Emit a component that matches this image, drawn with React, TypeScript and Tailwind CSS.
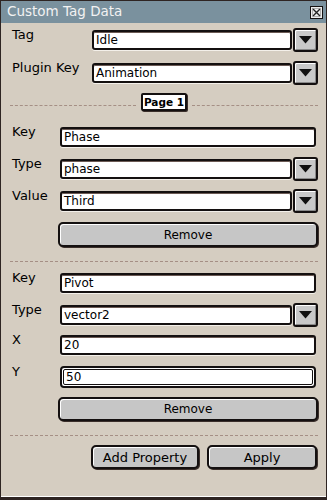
import React from 'react';

const Arrow = () => (
  <div className="w-[25px] h-[24px] shrink-0 bg-[#c9c9c9] border-2 border-[#141010] rounded-[3px] shadow-[inset_1px_1px_0_#ffffff,inset_-1px_-1px_0_#8a8a8a] flex items-center justify-center">
    <svg width="13" height="8" viewBox="0 0 13 8">
      <polygon points="0,0 13,0 6.5,7.5" fill="#111" />
    </svg>
  </div>
);

const Field = ({ value, focused }: { value: string; focused?: boolean }) => {
  if (focused) {
    return (
      <div className="flex-1 h-[22px] border-2 border-[#141010] rounded-[4px] bg-white p-[1px]">
        <div className="h-full border border-[#141010] rounded-[2px] pl-[2px] flex items-center text-[12px] leading-none text-black">
          {value}
        </div>
      </div>
    );
  }
  return (
    <div className="flex-1 h-[20px] bg-white border-2 border-[#141010] rounded-[3px] shadow-[inset_0_1px_0_#6b5a54,0_1px_0_#f4f0ea] pl-[2px] flex items-center text-[12px] leading-none text-black">
      {value}
    </div>
  );
};

const Label = ({ children, w }: { children: React.ReactNode; w: string }) => (
  <div className={`${w} shrink-0 pl-[2px] text-[13px] leading-[13px] text-black`}>{children}</div>
);

const SelectRow = ({ label, value, w }: { label: string; value: string; w: string }) => (
  <div className="flex items-start h-[24px]">
    <Label w={w}>{label}</Label>
    <div className="flex-1 flex items-center gap-[1px] h-[24px]">
      <Field value={value} />
      <Arrow />
    </div>
  </div>
);

const TextRow = ({ label, value, focused }: { label: string; value: string; focused?: boolean }) => (
  <div className="flex items-start h-[24px] pr-[2px]">
    <Label w="w-[50px]">{label}</Label>
    <div className="flex-1 flex items-center h-[24px]">
      <Field value={value} focused={focused} />
    </div>
  </div>
);

const Btn = ({ children, className }: { children: React.ReactNode; className: string }) => (
  <button
    className={`${className} h-[24px] bg-[#c6c6c6] border-2 border-[#141010] rounded-[5px] shadow-[inset_1px_1px_0_#ffffff,1px_1px_0_#3a2e2a] text-[12px] leading-none text-black flex items-center justify-center`}
  >
    {children}
  </button>
);

const Dashed = ({ className = '' }: { className?: string }) => (
  <div className={`border-t border-dashed border-[#a58f85] ${className}`} />
);

export default function App() {
  return (
    <div
      className="w-[327px] h-[500px] flex flex-col bg-[#d5cdc1] border-x border-t border-[#2e2422] border-b-[3px] shadow-[inset_0_-1px_0_#ffffff]"
      style={{ fontFamily: '"DejaVu Sans", sans-serif' }}
    >
      {/* Title bar */}
      <div className="h-[22px] bg-[#7a919e] flex items-center justify-between pl-[6px] pr-[3px]">
        <span className="text-[13.5px] text-[#f2f2f2] leading-none">Custom Tag Data</span>
        <div className="w-[13px] h-[13px] bg-[#ececec] border border-[#141010] flex items-center justify-center">
          <svg width="9" height="9" viewBox="0 0 9 9">
            <path d="M1 1 L8 8 M8 1 L1 8" stroke="#222" strokeWidth="1.4" />
            <rect x="0.5" y="0.5" width="8" height="8" fill="none" stroke="#888" strokeWidth="0.6" />
          </svg>
        </div>
      </div>

      <div className="flex-1 flex flex-col pl-[9px] pr-[8px] pt-[5px]">
        <SelectRow label="Tag" value="Idle" w="w-[82px]" />
        <div className="mt-[9px]">
          <SelectRow label="Plugin Key" value="Animation" w="w-[82px]" />
        </div>

        <div className="mt-[8px] h-[18px] flex items-center gap-[5px]">
          <Dashed className="flex-1 mt-[6px]" />
          <div className="w-[46px] h-[18px] bg-white border-2 border-[#141010] rounded-[2px] shadow-[1px_1px_0_#3a2e2a] flex items-center justify-center text-[10.5px] font-bold leading-none text-black">
            Page 1
          </div>
          <Dashed className="flex-1 mt-[6px]" />
        </div>

        <div className="mt-[14px]">
          <TextRow label="Key" value="Phase" />
        </div>
        <div className="mt-[8px]">
          <SelectRow label="Type" value="phase" w="w-[50px]" />
        </div>
        <div className="mt-[8px]">
          <SelectRow label="Value" value="Third" w="w-[50px]" />
        </div>
        <div className="mt-[9px] pl-[48px]">
          <Btn className="w-full !h-[25px]">Remove</Btn>
        </div>

        <Dashed className="mt-[14px]" />

        <div className="mt-[9px]">
          <TextRow label="Key" value="Pivot" />
        </div>
        <div className="mt-[8px]">
          <SelectRow label="Type" value="vector2" w="w-[50px]" />
        </div>
        <div className="mt-[6px]">
          <TextRow label="X" value="20" />
        </div>
        <div className="mt-[8px]">
          <TextRow label="Y" value="50" focused />
        </div>
        <div className="mt-[8px] pl-[48px]">
          <Btn className="w-full">Remove</Btn>
        </div>

        <Dashed className="mt-[14px]" />

        <div className="mt-[9px] flex justify-end gap-[8px] pr-[1px]">
          <Btn className="w-[108px] text-[13px]">Add Property</Btn>
          <Btn className="w-[110px] text-[13px]">Apply</Btn>
        </div>
      </div>
    </div>
  );
}
